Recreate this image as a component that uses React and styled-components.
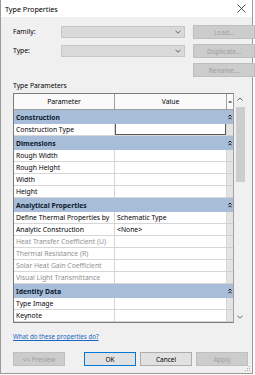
import React from 'react';
import styled, { createGlobalStyle } from 'styled-components';

const Global = createGlobalStyle`
  html, body { margin: 0; padding: 0; background: #ffffff; }
  body { font-family: "Noto Sans", "Open Sans", sans-serif; color: #000; }
  * { box-sizing: border-box; }
`;

const Dialog = styled.div`
  position: relative;
  width: 253px;
  height: 374px;
  border: 1px solid #9a9a9a;
  border-top: none;
  background: #f0f0f0;
  display: flex;
  flex-direction: column;
`;

const TitleBar = styled.div`
  height: 17px;
  background: #ffffff;
  display: flex;
  align-items: center;
  justify-content: space-between;
  padding: 0 6px 0 4px;
  font-size: 7.2px;
`;

const Body = styled.div`
  flex: 1;
  display: flex;
  flex-direction: column;
  padding: 8px 4px 0 12px;
`;

const TopGrid = styled.div`
  display: grid;
  grid-template-columns: 40px 124px 62px;
  grid-auto-rows: 14px;
  column-gap: 8px;
  row-gap: 5px;
`;

const Label = styled.div`
  font-size: 6.8px;
  align-self: center;
  line-height: 10px;
`;

const Combo = styled.div`
  align-self: center;
  height: 12px;
  background: #dadada;
  border: 1px solid #c6c6c6;
  display: flex;
  align-items: center;
  justify-content: flex-end;
  padding-right: 3px;
`;

const Button = styled.div`
  height: 14px;
  display: flex;
  align-items: center;
  justify-content: center;
  font-size: 6.5px;
  background: ${p => (p.disabled ? '#cccccc' : '#e1e1e1')};
  color: ${p => (p.disabled ? '#a0a0a0' : '#000000')};
  border: 1px solid ${p => (p.primary ? '#0078d7' : p.disabled ? '#bfbfbf' : '#adadad')};
  width: ${p => p.w || 52}px;
`;

const SectionLabel = styled.div`
  font-size: 6.8px;
  line-height: 10px;
  margin-top: 4px;
`;

const TableArea = styled.div`
  display: flex;
  margin-top: 2px;
  height: 230px;
`;

const Table = styled.div`
  width: 221px;
  border: 1px solid #7a7a7a;
  border-right-color: #a0a0a0;
  display: flex;
  flex-direction: column;
  background: #ffffff;
  overflow: hidden;
`;

const Row = styled.div`
  display: grid;
  grid-template-columns: 101px 112px 1fr;
  height: ${p => (p.header ? 16 : p.group ? 14 : 12)}px;
  flex: none;
  background: ${p => (p.group ? '#a8bed8' : p.header ? '#fafafa' : '#ffffff')};
  font-size: 6.8px;
  line-height: 11px;
`;

const Cell = styled.div`
  display: flex;
  align-items: center;
  justify-content: ${p => (p.center ? 'center' : 'flex-start')};
  padding-left: ${p => (p.center ? 0 : 2)}px;
  border-bottom: 1px solid ${p => (p.header ? '#a0a0a0' : '#d6d6d6')};
  border-right: 1px solid ${p => (p.header ? '#a0a0a0' : '#d6d6d6')};
  color: ${p => (p.muted ? '#8f8f8f' : '#000')};
  white-space: nowrap;
  overflow: hidden;
`;

const EqCell = styled.div`
  background: ${p => (p.header ? '#fafafa' : '#e4e4e4')};
  border-bottom: 1px solid ${p => (p.header ? '#a0a0a0' : '#d0d0d0')};
  display: flex;
  align-items: center;
  justify-content: center;
  font-size: 6.5px;
`;

const GroupName = styled.div`
  grid-column: 1 / 3;
  display: flex;
  align-items: center;
  padding-left: 2px;
  font-weight: 700;
  color: #0b1a2e;
`;

const GroupIcon = styled.div`
  display: flex;
  align-items: center;
  justify-content: center;
`;

const InputBox = styled.div`
  margin: -1px 0 0 0;
  height: 12px;
  width: 100%;
  border: 1px solid #5a5a5a;
  background: #fff;
`;

const ValueCell = styled(Cell)`
  padding-left: ${p => (p.boxed ? 0 : 2)}px;
`;

const Scrollbar = styled.div`
  width: 12px;
  display: flex;
  flex-direction: column;
  align-items: center;
`;

const ArrowSlot = styled.div`
  height: 12px;
  display: flex;
  align-items: center;
  justify-content: center;
`;

const Thumb = styled.div`
  width: 9px;
  height: 75px;
  margin-top: 2px;
  background: #cdcdcd;
`;

const Spacer = styled.div`
  flex: 1;
`;

const Link = styled.div`
  margin-top: 9px;
  font-size: 6.2px;
  line-height: 10px;
  color: #1a66c2;
  text-decoration: underline;
`;

const Footer = styled.div`
  display: flex;
  margin-top: 10px;
`;

const FooterRight = styled.div`
  margin-left: auto;
  display: flex;
  gap: 4px;
`;

const Grip = styled.svg`
  position: absolute;
  right: 1px;
  bottom: 1px;
`;

const Chevron = ({ up }) => (
  <svg width="6" height="4" viewBox="0 0 6 4">
    <path d={up ? 'M0.5 3.5 L3 1 L5.5 3.5' : 'M0.5 0.8 L3 3.2 L5.5 0.8'} fill="none" stroke="#555" strokeWidth="0.9" />
  </svg>
);

const Collapse = () => (
  <svg width="4" height="6" viewBox="0 0 4 6">
    <path d="M0.4 2.6 L2 1 L3.6 2.6 M0.4 5.3 L2 3.7 L3.6 5.3" fill="none" stroke="#111" strokeWidth="1" />
  </svg>
);

const rows = [
  { group: 'Construction' },
  { name: 'Construction Type', boxed: true },
  { group: 'Dimensions' },
  { name: 'Rough Width' },
  { name: 'Rough Height' },
  { name: 'Width' },
  { name: 'Height' },
  { group: 'Analytical Properties' },
  { name: 'Define Thermal Properties by', value: 'Schematic Type' },
  { name: 'Analytic Construction', value: '<None>' },
  { name: 'Heat Transfer Coefficient (U)', muted: true },
  { name: 'Thermal Resistance (R)', muted: true },
  { name: 'Solar Heat Gain Coefficient', muted: true },
  { name: 'Visual Light Transmittance', muted: true },
  { group: 'Identity Data' },
  { name: 'Type Image' },
  { name: 'Keynote' },
];

export default function App() {
  return (
    <>
      <Global />
      <Dialog>
        <TitleBar>
          <span>Type Properties</span>
          <svg width="9" height="9" viewBox="0 0 9 9">
            <path d="M0.5 0.5 L8.5 8.5 M8.5 0.5 L0.5 8.5" stroke="#222" strokeWidth="0.8" />
          </svg>
        </TitleBar>
        <Body>
          <TopGrid>
            <Label>Family:</Label>
            <Combo><Chevron /></Combo>
            <Button disabled w={62}>Load...</Button>
            <Label>Type:</Label>
            <Combo><Chevron /></Combo>
            <Button disabled w={62}>Duplicate...</Button>
            <div />
            <div />
            <Button disabled w={62}>Rename...</Button>
          </TopGrid>
          <SectionLabel>Type Parameters</SectionLabel>
          <TableArea>
            <Table>
              <Row header>
                <Cell header center>Parameter</Cell>
                <Cell header center>Value</Cell>
                <EqCell header>=</EqCell>
              </Row>
              {rows.map((r, i) =>
                r.group ? (
                  <Row group key={i}>
                    <GroupName>{r.group}</GroupName>
                    <GroupIcon><Collapse /></GroupIcon>
                  </Row>
                ) : (
                  <Row key={i}>
                    <Cell muted={r.muted}>{r.name}</Cell>
                    <ValueCell boxed={r.boxed}>
                      {r.boxed ? <InputBox /> : r.value}
                    </ValueCell>
                    <EqCell />
                  </Row>
                )
              )}
            </Table>
            <Scrollbar>
              <ArrowSlot><Chevron up /></ArrowSlot>
              <Thumb />
              <Spacer />
              <ArrowSlot><Chevron /></ArrowSlot>
            </Scrollbar>
          </TableArea>
          <Link>What do these properties do?</Link>
          <Footer>
            <Button disabled>&lt;&lt; Preview</Button>
            <FooterRight>
              <Button primary>OK</Button>
              <Button>Cancel</Button>
              <Button disabled>Apply</Button>
            </FooterRight>
          </Footer>
        </Body>
        <Grip width="6" height="6" viewBox="0 0 6 6">
          <rect x="4" y="0" width="1" height="1" fill="#b0b0b0" />
          <rect x="2" y="2" width="1" height="1" fill="#b0b0b0" />
          <rect x="4" y="2" width="1" height="1" fill="#b0b0b0" />
          <rect x="0" y="4" width="1" height="1" fill="#b0b0b0" />
          <rect x="2" y="4" width="1" height="1" fill="#b0b0b0" />
          <rect x="4" y="4" width="1" height="1" fill="#b0b0b0" />
        </Grip>
      </Dialog>
    </>
  );
}
